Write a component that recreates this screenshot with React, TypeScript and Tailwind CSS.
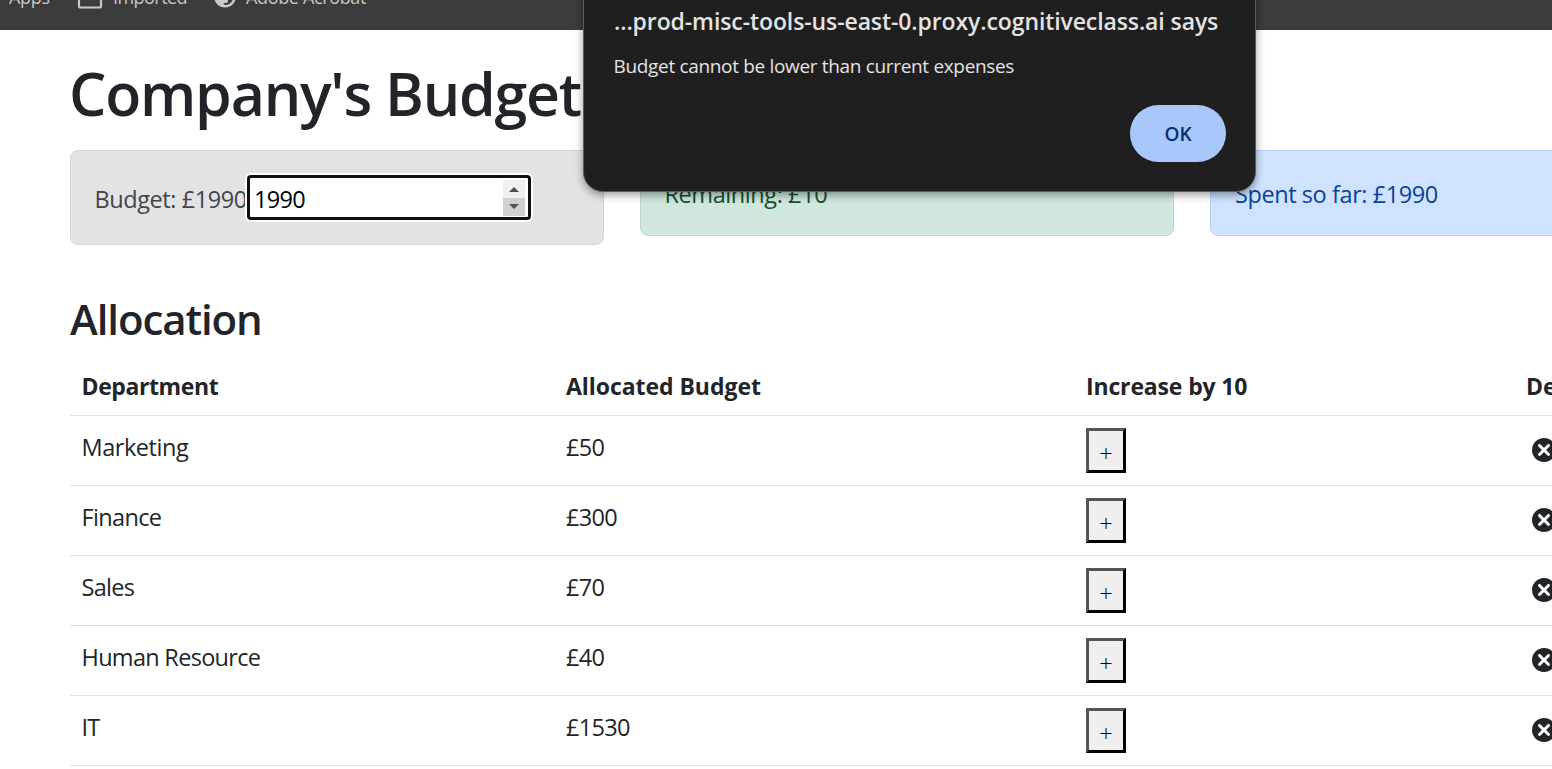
import { TiDelete } from "react-icons/ti";

const rows = [
  { name: "Marketing", cost: 50, track: "tracking-[-0.45px]" },
  { name: "Finance", cost: 300, track: "tracking-[-0.65px]" },
  { name: "Sales", cost: 70, track: "tracking-[-0.7px]" },
  { name: "Human Resource", cost: 40, track: "tracking-[-0.7px]" },
  { name: "IT", cost: 1530, track: "tracking-[-0.7px]" },
];

const columns = "grid grid-cols-[484px_520px_440px_480px]";

function BookmarksBar() {
  return (
    <div className="relative h-[30px] w-full overflow-hidden bg-[#3c3c3c]">
      <div className="-mt-[15px] flex h-6 items-center text-[18px] leading-6 text-[#c7c7c7]">
        <span className="ml-[9px] w-[68px] tracking-[-0.3px]">Apps</span>
        <svg className="mt-[5px] h-[22px] w-[26px]" viewBox="0 0 26 22" fill="none" stroke="#c7cacd" strokeWidth="2.2">
          <path d="M2 2.5h8l3 3h11v11.500q0 1.500-1.500 1.500H3.500q-1.500 0-1.500-1.500z" />
        </svg>
        <span className="ml-[10px] w-[101px] tracking-[-0.55px]">Imported</span>
        <svg className="h-[22px] w-[22px]" viewBox="0 0 22 22">
          <circle cx="11" cy="10.500" r="11" fill="#c7cacd" />
          <path d="M9 9.500h10.500q0 5-3.500 8-2 1.500-5 1.500-1.500-.4-1.500-2h2.500q2 0 2-2v-1.500h-5z" fill="#3c3c3c" />
        </svg>
        <span className="ml-[10px] tracking-[-0.35px]">Adobe Acrobat</span>
      </div>
    </div>
  );
}

function AlertDialog() {
  return (
    <div className="absolute -top-[20px] left-[583px] z-10 h-[212px] w-[673px] rounded-b-[20px] border-[1.5px] border-[#5c5c5c] bg-[#1f1f1f] shadow-[0_3px_8px_rgba(0,0,0,0.4)]">
      <div className="flex flex-col px-[29px] pt-[24px]">
        <h2 className="ml-px text-[23px] leading-8 font-semibold tracking-[-0.1px] whitespace-nowrap text-[#e3e3e3]">
          ...prod-misc-tools-us-east-0.proxy.cognitiveclass.ai says
        </h2>
        <p className="mt-[15px] ml-[0.5px] text-[19px] leading-7 tracking-[-0.33px] whitespace-nowrap text-[#e3e3e3]">
          Budget cannot be lower than current expenses
        </p>
        <button className="mt-[25px] h-[57px] w-[96px] self-end rounded-full bg-[#a8c7fa] text-[19px] font-semibold text-[#062e6f]">
          OK
        </button>
      </div>
    </div>
  );
}

function BudgetField() {
  return (
    <div className="flex h-[45px] w-[284px] shrink-0 items-center justify-between rounded-[4px] border-[3px] border-[#101010] bg-white pr-[3px] pl-1 text-black ring-2 ring-white">
      <span className="mt-[3px] tracking-[-0.7px]">1990</span>
      <div className="flex h-9 w-[22px] flex-col">
        <div className="flex h-[18px] items-center justify-center bg-[#f0f0f0]">
          <svg className="mt-px h-[5px] w-[10px]" viewBox="0 0 10 5"><path d="M0 5 5 0l5 5z" fill="#505050" /></svg>
        </div>
        <div className="flex h-[18px] items-center justify-center bg-[#d0d0d0]">
          <svg className="h-[5px] w-[10px]" viewBox="0 0 10 5"><path d="M0 0h10L5 5z" fill="#505050" /></svg>
        </div>
      </div>
    </div>
  );
}

export default function App() {
  return (
    <div className="relative h-[769px] w-full overflow-hidden bg-white font-['Open_Sans','Noto_Sans',sans-serif] text-[23.5px] leading-9 text-[#212529]">
      <BookmarksBar />
      <AlertDialog />
      <main className="w-[1924px] pl-[70px]">
        <h1 className="-ml-px pt-[24px] text-[59px] leading-[78px] font-semibold tracking-[-1.2px]">Company's Budget</h1>
        <div className="mt-[18px] grid h-[95px] grid-cols-[534px_534px_534px] items-start gap-9 tracking-[-0.42px]">
          <div className="flex h-[95px] items-center rounded-lg border border-[#d3d6d8] bg-[#e2e3e5] pl-[23.5px] text-[#41464b]">
            <span className="mt-[3px] w-[152.5px] shrink-0 overflow-hidden whitespace-nowrap">Budget: £1990</span>
            <BudgetField />
          </div>
          <div className="h-[86px] rounded-lg border border-[#badbcc] bg-[#d1e7dd] pt-[25px] pl-[23.5px] text-[#0f5132]">
            Remaining: £10
          </div>
          <div className="h-[86px] rounded-lg border border-[#b6d4fe] bg-[#cfe2ff] pt-[25px] pl-[24px] text-[#084298]">
            Spent so far: £1990
          </div>
        </div>
        <h2 className="mt-[47px] text-[42px] leading-[54px] font-semibold tracking-[-1.1px]">Allocation</h2>
        <div className="mt-[20px]">
          <div className={`${columns} h-[50px] border-b border-[#dee2e6] pt-[2px] text-[23px] font-bold`}>
            <span className="pl-[11.5px] tracking-[-0.4px]">Department</span>
            <span className="pl-3 tracking-[-0.05px]">Allocated Budget</span>
            <span className="pl-3 tracking-[-0.15px]">Increase by 10</span>
            <span className="pl-3">Decrease by 10</span>
          </div>
          {rows.map((row) => (
            <div key={row.name} className={`${columns} h-[70px] border-b border-[#dee2e6] pt-3`}>
              <span className={`mt-[1px] pl-[11.5px] ${row.track}`}>{row.name}</span>
              <span className="mt-[1px] pl-3 tracking-[-0.7px]">£{row.cost}</span>
              <div className="pl-3">
                <button className="flex h-[45px] w-10 items-start justify-center border-[3px] border-t-[#555] border-r-black border-b-black border-l-[#555] bg-[#efefef] pt-1 font-light text-black">
                  +
                </button>
              </div>
              <div className="pt-1 pl-3">
                <TiDelete size={36} />
              </div>
            </div>
          ))}
        </div>
      </main>
    </div>
  );
}
